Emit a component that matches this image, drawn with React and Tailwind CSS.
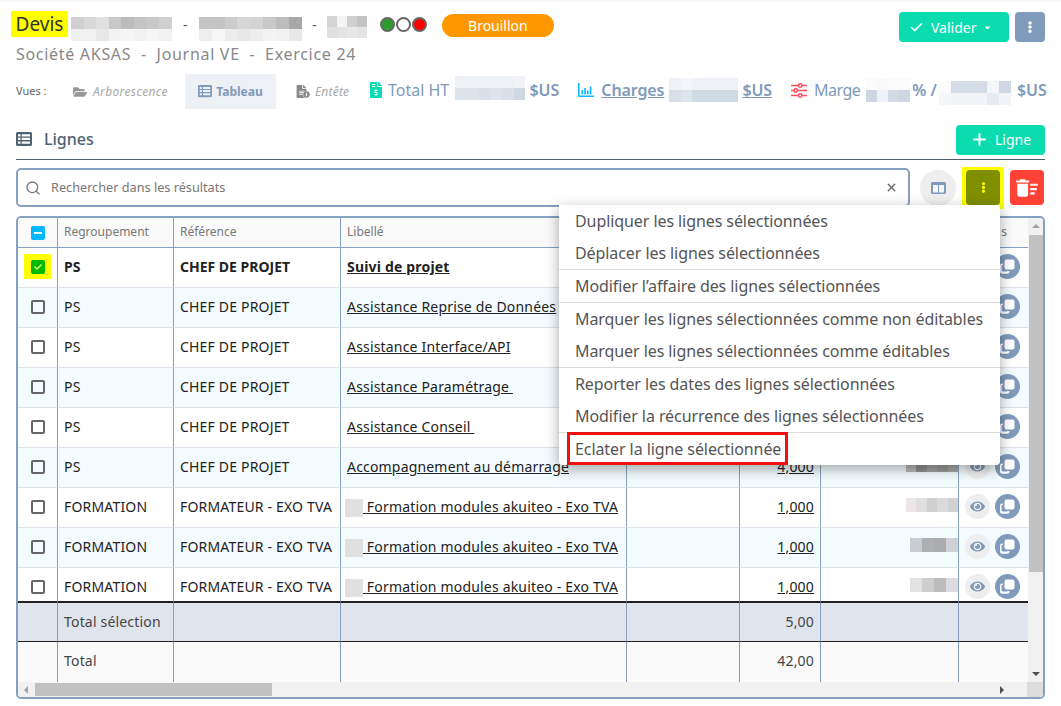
import { FaFolderOpen, FaFileInvoiceDollar, FaFileAlt, FaInfoCircle, FaEye, FaCheck, FaEllipsisV, FaCaretDown } from 'react-icons/fa';
import { MdDeleteSweep } from 'react-icons/md';
import { Search, X, Check, Plus } from 'lucide-react';

const lines = [
  { group: 'PS', ref: 'CHEF DE PROJET', label: 'Suivi de projet', bold: true, checked: true },
  { group: 'PS', ref: 'CHEF DE PROJET', label: 'Assistance Reprise de Données' },
  { group: 'PS', ref: 'CHEF DE PROJET', label: 'Assistance Interface/API' },
  { group: 'PS', ref: 'CHEF DE PROJET', label: 'Assistance Paramétrage ' },
  { group: 'PS', ref: 'CHEF DE PROJET', label: 'Assistance Conseil ' },
  { group: 'PS', ref: 'CHEF DE PROJET', label: 'Accompagnement au démarrage', qty: '4,000', blur: ['#b9b9b9', '#8f8f8f', '#a3a3a3', '#9a9a9a', '#a8a8a8'] },
  { group: 'FORMATION', ref: 'FORMATEUR - EXO TVA', label: 'Formation modules akuiteo - Exo TVA', qty: '1,000', mod: true, blur: ['#ece6e8', '#dfdfdf', '#d0d0d0', '#d8dadc', '#d2d2d2'] },
  { group: 'FORMATION', ref: 'FORMATEUR - EXO TVA', label: 'Formation modules akuiteo - Exo TVA', qty: '1,000', mod: true, blur: ['#c9ccd2', '#adb0b2', '#aaacae', '#cfd1d6'] },
  { group: 'FORMATION', ref: 'FORMATEUR - EXO TVA', label: 'Formation modules akuiteo - Exo TVA', qty: '1,000', mod: true, last: true, blur: ['#e3e3e6', '#cecece', '#bcbcbc', '#dcdce0'] },
];

const menu = [
  ['Dupliquer les lignes sélectionnées', 'Déplacer les lignes sélectionnées'],
  ['Modifier l’affaire des lignes sélectionnées'],
  ['Marquer les lignes sélectionnées comme non éditables', 'Marquer les lignes sélectionnées comme éditables'],
  ['Reporter les dates des lignes sélectionnées', 'Modifier la récurrence des lignes sélectionnées'],
];

// pixellated redacted zone, one array of colours per row
function Blur({ rows, cell = 12, height = 12 }) {
  return (
    <span className="inline-flex flex-col align-middle shrink-0">
      {rows.map((row, i) => (
        <span key={i} className="flex">
          {row.map((c, j) => (
            <span key={j} style={{ background: c, width: cell, height }} />
          ))}
        </span>
      ))}
    </span>
  );
}

function Columns() {
  return (
    <svg width="15" height="12" viewBox="0 0 15 12">
      <rect x="0" y="0" width="15" height="12" rx="1.5" fill="#7f9aba" />
      <rect x="2" y="3" width="5" height="7.5" fill="#f4f6f9" />
      <rect x="8" y="3" width="5" height="7.5" fill="#f4f6f9" />
    </svg>
  );
}

function TableIcon({ size = 16 }) {
  return (
    <svg width={size} height={size * 0.875} viewBox="0 0 16 14" fill="currentColor" fillRule="evenodd">
      <path d="M1.500 0h13A1.500 1.500 0 0 1 16 1.500v11a1.500 1.500 0 0 1-1.500 1.500h-13A1.500 1.500 0 0 1 0 12.500v-11A1.500 1.500 0 0 1 1.500 0zM2 2.200v2.300h2.500V2.200zM5.700 2.200v2.300H14V2.200zM2 5.800v2.300h2.500V5.800zM5.700 5.800v2.300H14V5.800zM2 9.400v2.400h2.500V9.400zM5.700 9.400v2.400H14V9.400z" />
    </svg>
  );
}

function ChartIcon() {
  return (
    <svg width="16" height="16" viewBox="0 0 16 16" fill="#0fb8ff">
      <path d="M0 1h1.600v12.600H16V15H1a1 1 0 0 1-1-1z" />
      <rect x="3.400" y="8" width="1.700" height="4.400" />
      <rect x="6.200" y="6" width="1.700" height="6.400" />
      <rect x="9" y="8.500" width="1.700" height="3.900" />
      <rect x="11.800" y="4.500" width="1.700" height="7.900" />
    </svg>
  );
}

function SlidersIcon() {
  return (
    <svg width="16" height="15" viewBox="0 0 16 15" fill="none" stroke="#ff4b5c" strokeWidth="1.500">
      <path d="M0 2.500h7.500M11 2.500h5M0 7.500h3M6.500 7.500H16M0 12.500h7.500M11 12.500h5" />
      <circle cx="9.200" cy="2.500" r="1.700" />
      <circle cx="4.800" cy="7.500" r="1.700" />
      <circle cx="9.200" cy="12.500" r="1.700" />
    </svg>
  );
}

function CopyIcon() {
  return (
    <svg width="15" height="15" viewBox="0 0 15 15" fill="#fff">
      <rect x="4.500" y="0.500" width="10" height="10" rx="2" />
      <path d="M3 4.500v1.600h-.6a.8.8 0 0 0-.8.8v4.700c0 .5.3.8.8.8h4.700c.5 0 .8-.3.8-.8V12h1.600v.6c0 1.300-.9 2.200-2.200 2.200H2.200C.9 14.800 0 13.900 0 12.600V6.700C0 5.400.9 4.500 2.200 4.500z" />
    </svg>
  );
}

export default function App() {
  return (
    <div className="relative h-[706px] w-full overflow-hidden bg-white px-4 font-['Open_Sans',sans-serif] border-t-2 border-[#f7f7f7]">
      {/* title */}
      <div className="flex items-start h-[46px] pt-[9px]">
        <div className="-ml-[5px] h-[26px] w-[57px] bg-[#ffff00] text-[#333] text-[19px] leading-[26px] text-center shrink-0">Devis</div>
        <div className="flex items-center h-[26px] ml-[3px]">
          <span className="self-start mt-[6px] flex">
            <Blur cell={12.6} rows={[['#d0d0d0', '#d8d8d8', '#e0e0e0', '#c8c8c8', '#bcbcbc', '#c4c4c4', '#c8c8c8', '#d0d0d0'], ['#f0f0f0', '#f0f0f0', '#e8e8e8', '#f4f4f4', '#f6f6f6', '#f2f2f2', '#f6f6f6', '#f2f2f2']]} />
          </span>
          <span className="w-[27px] text-center text-[#555] text-[14px]">-</span>
          <span className="self-start mt-[6px] flex">
            <Blur cell={12.9} rows={[['#c4c4c4', '#c4c4c4', '#cccccc', '#d6d6d6', '#d4d4d4', '#c8c8c8', '#bcbcbc', '#a8a8a8'], ['#eeeeee', '#f6f6f6', '#ececec', '#e8e8e8', '#eeeeee', '#f4f4f4', '#f2f2f2', '#e8e8e8']]} />
          </span>
          <span className="w-[25px] text-center text-[#555] text-[14px]">-</span>
          <span className="self-start mt-[5px] flex">
            <Blur cell={10} height={11} rows={[['#d4d4d4', '#f4f4f4', '#d0d0d0', '#c4c4c4'], ['#e0e0e0', '#e4e4e4', '#e8e8e8', '#e4e4e4']]} />
          </span>
          <span className="ml-[13px] flex items-center gap-[1px]">
            <span className="w-[15px] h-[15px] rounded-full bg-[#2e9b2e] border-2 border-[#666]" />
            <span className="w-[15px] h-[15px] rounded-full bg-white border-2 border-[#666]" />
            <span className="w-[15px] h-[15px] rounded-full bg-[#ff0000] border-2 border-[#666]" />
          </span>
        </div>
        <div className="ml-[15px] mt-[3px] h-[23px] w-[112px] rounded-full bg-[#ff9800] text-white text-[14px] leading-[23px] text-center">Brouillon</div>
        <div className="ml-auto flex gap-[6px] mt-[1px]">
          <div className="flex items-center pl-[10px] h-[30px] w-[110px] rounded bg-[#0adcb0] text-white text-[14px]">
            <Check size={15} strokeWidth={2.500} />
            <span className="ml-[7px] mr-[6px]">Valider</span>
            <FaCaretDown size={9} />
          </div>
          <div className="flex items-center justify-center h-[30px] w-[30px] rounded bg-[#7f9aba] text-white">
            <FaEllipsisV size={12} />
          </div>
        </div>
      </div>

      <div className="h-[18px] text-[16px] leading-[12px] tracking-[0.7px] text-[#888]">Société AKSAS&nbsp; -&nbsp; Journal VE&nbsp; -&nbsp; Exercice 24</div>

      {/* views and totals */}
      <div className="flex items-center h-[35px] mt-[8px] whitespace-nowrap">
        <span className="text-[11px] text-[#666] w-[57px] shrink-0">Vues :</span>
        <div className="flex items-center gap-[6px] w-[112px] shrink-0 text-[#a8a8a8] italic text-[12px] tracking-[0.35px]">
          <FaFolderOpen size={14} className="text-[#999]" />
          Arborescence
        </div>
        <div className="flex items-center justify-center gap-[4px] h-[35px] w-[91px] shrink-0 bg-[#edf0f5] text-[#7f9aba] font-bold text-[12px]">
          <TableIcon size={14} />
          Tableau
        </div>
        <div className="flex items-center gap-[7px] w-[92px] shrink-0 pl-[19px] text-[#a8a8a8] italic text-[12px] tracking-[0.2px]">
          <span className="relative flex">
            <FaFileAlt size={13} className="text-[#888]" />
            <FaInfoCircle size={7} className="absolute -right-[2px] bottom-0 text-[#888] bg-white rounded-full" />
          </span>
          Entête
        </div>
        <div className="flex items-center shrink-0 mb-[3px] text-[16px] text-[#7f9aba]">
          <FaFileInvoiceDollar size={16} className="text-[#0adcb0] mr-[4px]" />
          Total HT
          <span className="ml-[6px] mb-[4px] flex"><Blur cell={11.7} rows={[['#eef1f5', '#edf0f4', '#eef1f5', '#eef1f5', '#edf0f4', '#f0f2f6'], ['#dde3eb', '#dde3eb', '#d8dfe8', '#dde3eb', '#d8dfe8', '#ced8e3']]} /></span>
          <span className="ml-[4px] font-semibold">$US</span>
        </div>
        <div className="flex items-center shrink-0 mb-[3px] text-[16px] text-[#7f9aba] ml-[19px] font-semibold tracking-[-0.1px]">
          <span className="mr-[7px] flex"><ChartIcon /></span>
          <span className="underline">Charges</span>
          <span className="ml-[5px] flex"><Blur cell={11.500} rows={[['#eef1f5', '#f4f5f8', '#eef1f5', '#eef1f5', '#eef1f5', '#eef1f5'], ['#d8dfe8', '#dde3eb', '#d0dae5', '#d0dae5', '#d0dae5', '#d0dae5']]} /></span>
          <span className="ml-[4px] underline">$US</span>
        </div>
        <div className="flex items-center shrink-0 mb-[3px] text-[16px] text-[#7f9aba] ml-[19px]">
          <span className="mr-[7px] flex"><SlidersIcon /></span>
          <span className="tracking-[-0.5px]">Marge</span>
          <span className="ml-[6px] flex"><Blur cell={11} rows={[['#fbfbfc', '#f8f9fb', '#fbfbfc', '#fbfbfc'], ['#cdd6e2', '#eef1f5', '#d2dae5', '#cdd6e2']]} /></span>
          <span className="ml-[2px] font-semibold">% /</span>
          <span className="ml-[2px] mt-[6px] flex"><Blur cell={12} rows={[['#fbfbfc', '#d4dce7', '#d4dce7', '#d4dce7', '#f4f6f8', '#cfd8e4'], ['#f4f6f8', '#f2f4f7', '#f2f4f7', '#f2f4f7', '#e8ecf1', '#f2f4f7']]} /></span>
          <span className="ml-[6px] font-semibold">$US</span>
        </div>
      </div>

      {/* section title */}
      <div className="flex items-center justify-between h-[30px] mt-[16px] text-[#4f6272]">
        <div className="flex items-center gap-[12px] pb-[2px] text-[16px] font-medium">
          <TableIcon />
          Lignes
        </div>
        <div className="flex items-center justify-center gap-[6px] h-[30px] w-[89px] pb-[2px] rounded bg-[#0adcb0] text-white text-[14px]">
          <Plus size={19} strokeWidth={2.500} />
          Ligne
        </div>
      </div>
      <div className="h-[1px] mt-[4px] bg-[#4f5f6b]" />

      {/* search */}
      <div className="flex items-center mt-[8px] h-[39px]">
        <div className="flex items-center h-[39px] w-[894px] border-2 border-[#86a0bf] rounded-[5px] px-[7px] font-['Roboto',sans-serif] text-[12.7px]">
          <Search size={16} strokeWidth={2} className="text-[#777]" />
          <span className="ml-[10px] text-[#777]">Rechercher dans les résultats</span>
          <X size={13} strokeWidth={2.500} className="ml-auto mr-[3px] text-[#666]" />
        </div>
        <div className="flex items-center justify-center ml-[10px] w-[36px] h-[36px] rounded-full bg-[#eeeeee]"><Columns /></div>
        <div className="ml-[6px] w-[42px] h-[42px] bg-[#ffff00] flex items-center justify-center">
          <div className="flex items-center justify-center w-[34px] h-[35px] rounded bg-[#808f00] text-[#ffff00]"><FaEllipsisV size={11} /></div>
        </div>
        <div className="ml-[6px] flex items-center justify-center w-[34px] h-[35px] rounded bg-[#ff4136] text-white"><MdDeleteSweep size={26} /></div>
      </div>

      {/* table */}
      <div className="mt-[9px] h-[483px] border-2 border-[#86a0bf] rounded-[5px] overflow-hidden flex flex-col text-[14px] tracking-[0.18px] text-[#222]">
        <div className="flex h-[464px]">
          <table className="w-[1010px] table-fixed border-separate border-spacing-0 self-start">
            <colgroup>
              <col className="w-[40px]" /><col className="w-[116px]" /><col className="w-[167px]" /><col className="w-[286px]" />
              <col className="w-[113px]" /><col className="w-[81px]" /><col className="w-[138px]" /><col className="w-[69px]" />
            </colgroup>
            <thead>
              <tr className="h-[30px] bg-[#fafafa] text-[12px] font-normal tracking-normal text-[#777]">
                <th className="border-r border-b border-[#86a0bf]">
                  <span className="mx-auto flex items-center justify-center w-[14px] h-[14px] rounded-[2px] bg-[#00b8ff]"><span className="w-[8px] h-[2px] bg-white" /></span>
                </th>
                <th className="border-r border-b border-[#86a0bf] px-[6px] pb-[2px] text-left font-normal">Regroupement</th>
                <th className="border-r border-b border-[#86a0bf] px-[6px] pb-[2px] text-left font-normal">Référence</th>
                <th className="border-r border-b border-[#86a0bf] px-[6px] pb-[2px] text-left font-normal">Libellé</th>
                <th className="border-r border-b border-[#86a0bf] px-[6px] text-left font-normal"></th>
                <th className="border-r border-b border-[#86a0bf] px-[6px] text-left font-normal"></th>
                <th className="border-r border-b border-[#86a0bf] px-[6px] text-left font-normal"></th>
                <th className="border-b border-[#86a0bf] pr-[21px] pb-[2px] text-right font-normal">
                  <span className="inline-block w-[7px] overflow-hidden align-bottom">s</span>
                </th>
              </tr>
            </thead>
            <tbody>
              {lines.map((l, i) => (
                <Row key={i} line={l} odd={i % 2 === 1} />
              ))}
              <tr className="h-[39px] bg-[#e0e5ed] text-[#444]">
                <td className="border-r border-b border-r-[#86a0bf] border-b-[#222]"></td>
                <td className="border-r border-b border-r-[#86a0bf] border-b-[#222] px-[6px] pb-[2px] whitespace-nowrap">Total sélection</td>
                <td className="border-r border-b border-r-[#86a0bf] border-b-[#222]"></td>
                <td className="border-r border-b border-r-[#86a0bf] border-b-[#222]"></td>
                <td className="border-r border-b border-r-[#86a0bf] border-b-[#222]"></td>
                <td className="border-r border-b border-r-[#86a0bf] border-b-[#222] px-[6px] pb-[2px] text-right">5,00</td>
                <td className="border-r border-b border-r-[#86a0bf] border-b-[#222]"></td>
                <td className="border-b border-b-[#222]"></td>
              </tr>
              <tr className="h-[40px] bg-[#fafafa] text-[#444]">
                <td className="border-r border-[#86a0bf]"></td>
                <td className="border-r border-[#86a0bf] px-[6px] pb-[4px]">Total</td>
                <td className="border-r border-[#86a0bf]"></td>
                <td className="border-r border-[#86a0bf]"></td>
                <td className="border-r border-[#86a0bf]"></td>
                <td className="border-r border-[#86a0bf] px-[6px] pb-[4px] text-right">42,00</td>
                <td className="border-r border-[#86a0bf]"></td>
                <td></td>
              </tr>
            </tbody>
          </table>
          {/* vertical scrollbar */}
          <div className="w-[16px] bg-[#f1f1f1] flex flex-col items-center">
            <span className="mt-[6px] w-0 h-0 border-x-[4px] border-x-transparent border-b-[4px] border-b-[#a3a3a3]" />
            <span className="mt-[7px] h-[337px] w-[14px] bg-[#c1c1c1]" />
            <span className="mt-auto mb-[6px] w-0 h-0 border-x-[4px] border-x-transparent border-t-[4px] border-t-[#505050]" />
          </div>
        </div>
        {/* horizontal scrollbar */}
        <div className="flex items-center h-[15px] bg-[#f1f1f1]">
          <span className="ml-[6px] w-0 h-0 border-y-[4px] border-y-transparent border-r-[4px] border-r-[#a3a3a3]" />
          <span className="ml-[7px] h-[13px] w-[237px] bg-[#c1c1c1]" />
          <span className="ml-auto mr-[23px] w-0 h-0 border-y-[4px] border-y-transparent border-l-[4px] border-l-[#505050]" />
          <span className="w-[16px] h-[15px] bg-[#dcdcdc]" />
        </div>
      </div>

      {/* actions menu, open over the table */}
      <div className="absolute left-[559px] top-[203px] w-[441px] h-[260px] bg-white rounded-b-[4px] shadow-[0_4px_14px_rgba(0,0,0,0.35)] text-[16px] tracking-[-0.08px] text-[#555]">
        {menu.map((group, i) => (
          <div key={i} className="border-b border-[#ddd]">
            {group.map(item => (
              <div key={item} className="h-[32px] leading-[32px] px-[16px] whitespace-nowrap">{item}</div>
            ))}
          </div>
        ))}
        <div className="h-[32px] leading-[32px] px-[16px]">Eclater la ligne sélectionnée</div>
        <div className="absolute left-[8px] top-[227px] w-[221px] h-[33px] border-[3px] border-[#ee1111]" />
      </div>
    </div>
  );
}

function Row({ line, odd }) {
  const tall = line.last ? 'h-[35px]' : 'h-[40px]';
  const bg = odd ? 'bg-[#f3fbfe]' : 'bg-white';
  const under = line.last ? 'border-b-2 border-b-[#222]' : 'border-b border-b-[#dce3ea]';
  const cell = `border-r border-r-[#86a0bf] ${under}`;
  const pad = line.last ? 'pt-[4px]' : 'pb-[2px]';
  return (
    <tr className={`${tall} ${bg} ${line.bold ? 'font-bold' : ''}`}>
      <td className={`${cell} ${pad}`}>
        {line.checked ? (
          <span className="mx-auto flex items-center justify-center w-[27px] h-[25px] bg-[#ffff00]">
            <span className="flex items-center justify-center w-[14px] h-[14px] rounded-[2px] bg-[#00b800] text-[#d8ff60]"><FaCheck size={8} /></span>
          </span>
        ) : (
          <span className="mx-auto block w-[14px] h-[14px] rounded-[2px] border-2 border-[#666]" />
        )}
      </td>
      <td className={`${cell} ${pad} px-[6px] whitespace-nowrap`}>{line.group}</td>
      <td className={`${cell} ${pad} px-[6px] whitespace-nowrap ${line.bold ? 'tracking-normal' : ''}`}>{line.ref}</td>
      <td className={`${cell} ${pad} px-[6px] whitespace-nowrap overflow-hidden`}>
        {line.mod && <span className="inline-block align-middle -ml-[2px] w-[18px] h-[18px] bg-[#e0e0e0]" />}
        {line.mod && <span className="underline">&nbsp;</span>}
        <span className="underline whitespace-pre">{line.label}</span>
      </td>
      <td className={cell}></td>
      <td className={`${cell} ${pad} px-[6px] text-right`}>{line.qty && <span className="underline">{line.qty}</span>}</td>
      <td className={`${cell} ${pad} text-right`}>
        {line.blur && <span className="inline-flex"><Blur cell={line.blur.length === 5 ? 10.400 : 12} height={14} rows={[line.blur]} /></span>}
      </td>
      <td className={`${under} ${pad}`}>
        <div className="flex items-center gap-[5px] pl-[6px]">
          <span className="flex items-center justify-center w-[25px] h-[25px] rounded-full bg-[#eeeeee] text-[#7f9aba]"><FaEye size={15} /></span>
          <span className="flex items-center justify-center w-[25px] h-[25px] rounded-full bg-[#7f9aba]"><CopyIcon /></span>
        </div>
      </td>
    </tr>
  );
}
